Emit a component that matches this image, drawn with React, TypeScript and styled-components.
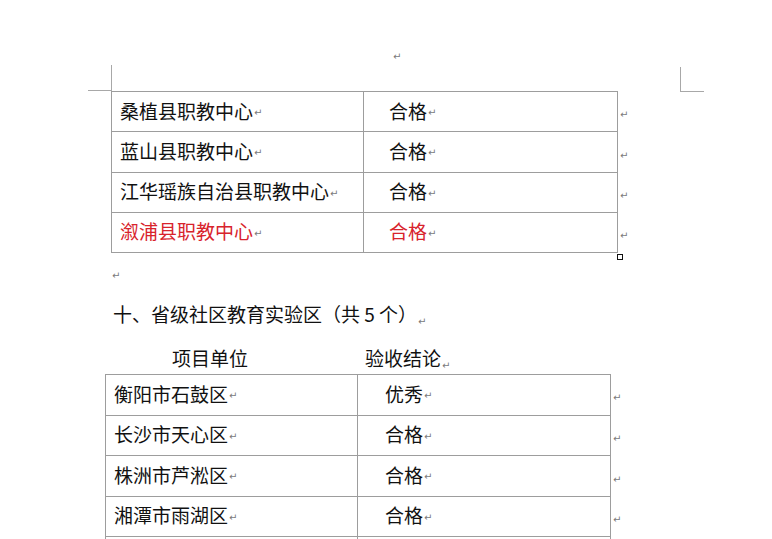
import React from "react";
import styled, { createGlobalStyle, css } from "styled-components";

const GlobalStyle = createGlobalStyle`
  html, body { margin: 0; padding: 0; background: #ffffff; }
  body { font-family: "Noto Sans CJK SC", "Noto Sans", sans-serif; color: #111111; }
`;

const Page = styled.div`
  position: relative;
  width: 772px;
  height: 539px;
  overflow: hidden;
  background: #ffffff;
  display: flex;
  flex-direction: column;
`;

const CropMark = styled.div<{ $side: "left" | "right" }>`
  position: absolute;
  width: 23px;
  ${(p) =>
    p.$side === "left"
      ? css`
          left: 88px;
          top: 65px;
          height: 25px;
          border-right: 1px solid #a8a8a8;
          border-bottom: 1px solid #a8a8a8;
        `
      : css`
          left: 680px;
          top: 67px;
          height: 24px;
          border-left: 1px solid #a8a8a8;
          border-bottom: 1px solid #a8a8a8;
        `}
`;

const Mark = styled.span`
  font-family: "DejaVu Sans", sans-serif;
  font-size: 10px;
  line-height: 1;
  color: #7a7a7a;
  margin-left: 1px;
  position: relative;
  top: 3px;
`;

const MarkLine = styled.div<{ $top: number; $left: number }>`
  margin-top: ${(p) => p.$top}px;
  padding-left: ${(p) => p.$left}px;
  height: 14px;
  line-height: 14px;
  font-family: "DejaVu Sans", sans-serif;
  font-size: 10px;
  color: #7a7a7a;
`;

const Heading = styled.div`
  margin-top: 18px;
  padding-left: 113px;
  height: 26px;
  line-height: 26px;
  font-size: 19px;
  color: #111111;
  white-space: nowrap;
`;

const HeaderRow = styled.div`
  margin-top: 18px;
  display: flex;
  height: 26px;
  line-height: 26px;
  font-size: 19px;
  white-space: nowrap;
`;

const HeaderLabel = styled.div<{ $width: number; $pad: number }>`
  width: ${(p) => p.$width}px;
  padding-left: ${(p) => p.$pad}px;
  box-sizing: border-box;
`;

const Spacer = styled.div<{ $width: number }>`
  width: ${(p) => p.$width}px;
  flex: none;
`;

const Table = styled.div<{ $left: number; $top: number }>`
  position: relative;
  margin-left: ${(p) => p.$left}px;
  margin-top: ${(p) => p.$top}px;
  display: flex;
  flex-direction: column;
  width: fit-content;
`;

const Row = styled.div`
  display: flex;
`;

const Cell = styled.div<{ $width: number; $pad: number; $h: number; $red?: boolean }>`
  box-sizing: border-box;
  flex: none;
  width: ${(p) => p.$width}px;
  height: ${(p) => p.$h + 1}px;
  padding-left: ${(p) => p.$pad}px;
  padding-bottom: 3px;
  border-right: 1px solid #9d9d9d;
  border-bottom: 1px solid #9d9d9d;
  display: flex;
  align-items: center;
  font-size: 19px;
  line-height: 1;
  white-space: nowrap;
  color: ${(p) => (p.$red ? "#d8232c" : "#111111")};
  &:first-child {
    border-left: 1px solid #9d9d9d;
  }
  ${Row}:first-child & {
    border-top: 1px solid #9d9d9d;
    height: ${(p) => p.$h + 2}px;
  }
`;

const RowMark = styled.div`
  display: flex;
  align-items: center;
  padding-left: 2px;
  padding-top: 6px;
  font-family: "DejaVu Sans", sans-serif;
  font-size: 10px;
  color: #7a7a7a;
`;

const Handle = styled.div`
  position: absolute;
  left: 506px;
  top: calc(100% + 1px);
  width: 4px;
  height: 4px;
  border: 1px solid #111;
  background: #fff;
`;

type Item = { name: string; result: string; red?: boolean };

const table1: Item[] = [
  { name: "桑植县职教中心", result: "合格" },
  { name: "蓝山县职教中心", result: "合格" },
  { name: "江华瑶族自治县职教中心", result: "合格" },
  { name: "溆浦县职教中心", result: "合格", red: true },
];

const table2: Item[] = [
  { name: "衡阳市石鼓区", result: "优秀" },
  { name: "长沙市天心区", result: "合格" },
  { name: "株洲市芦淞区", result: "合格" },
  { name: "湘潭市雨湖区", result: "合格" },
  { name: "", result: "" },
];

type TableProps = {
  items: Item[];
  left: number;
  top: number;
  c1: number;
  c2: number;
  pad1: number;
  pad2: number;
  h: number;
  handle?: boolean;
};

const DataTable: React.FC<TableProps> = ({ items, left, top, c1, c2, pad1, pad2, h, handle }) => (
  <Table $left={left} $top={top}>
    {items.map((it, i) => (
      <Row key={i}>
        <Cell $width={c1} $pad={pad1} $h={h} $red={it.red}>
          {it.name && (
            <>
              {it.name}
              <Mark>↵</Mark>
            </>
          )}
        </Cell>
        <Cell $width={c2} $pad={pad2} $h={h} $red={it.red}>
          {it.result && (
            <>
              {it.result}
              <Mark>↵</Mark>
            </>
          )}
        </Cell>
        {it.name && <RowMark>↵</RowMark>}
      </Row>
    ))}
    {handle && <Handle />}
  </Table>
);

export default function App() {
  return (
    <>
      <GlobalStyle />
      <Page>
        <CropMark $side="left" />
        <CropMark $side="right" />
        <MarkLine $top={50} $left={393}>↵</MarkLine>
        <DataTable
          items={table1}
          left={111}
          top={27}
          c1={253}
          c2={254}
          pad1={8}
          pad2={25}
          h={39.25}
          handle
        />
        <MarkLine $top={16} $left={112}>↵</MarkLine>
        <Heading>
          十、省级社区教育实验区（共 5 个）<Mark>↵</Mark>
        </Heading>
        <HeaderRow>
          <Spacer $width={105} />
          <HeaderLabel $width={253} $pad={67}>项目单位</HeaderLabel>
          <HeaderLabel $width={253} $pad={7}>
            验收结论<Mark>↵</Mark>
          </HeaderLabel>
        </HeaderRow>
        <DataTable
          items={table2}
          left={105}
          top={3}
          c1={253}
          c2={253}
          pad1={8}
          pad2={27}
          h={39.5}
        />
      </Page>
    </>
  );
}
